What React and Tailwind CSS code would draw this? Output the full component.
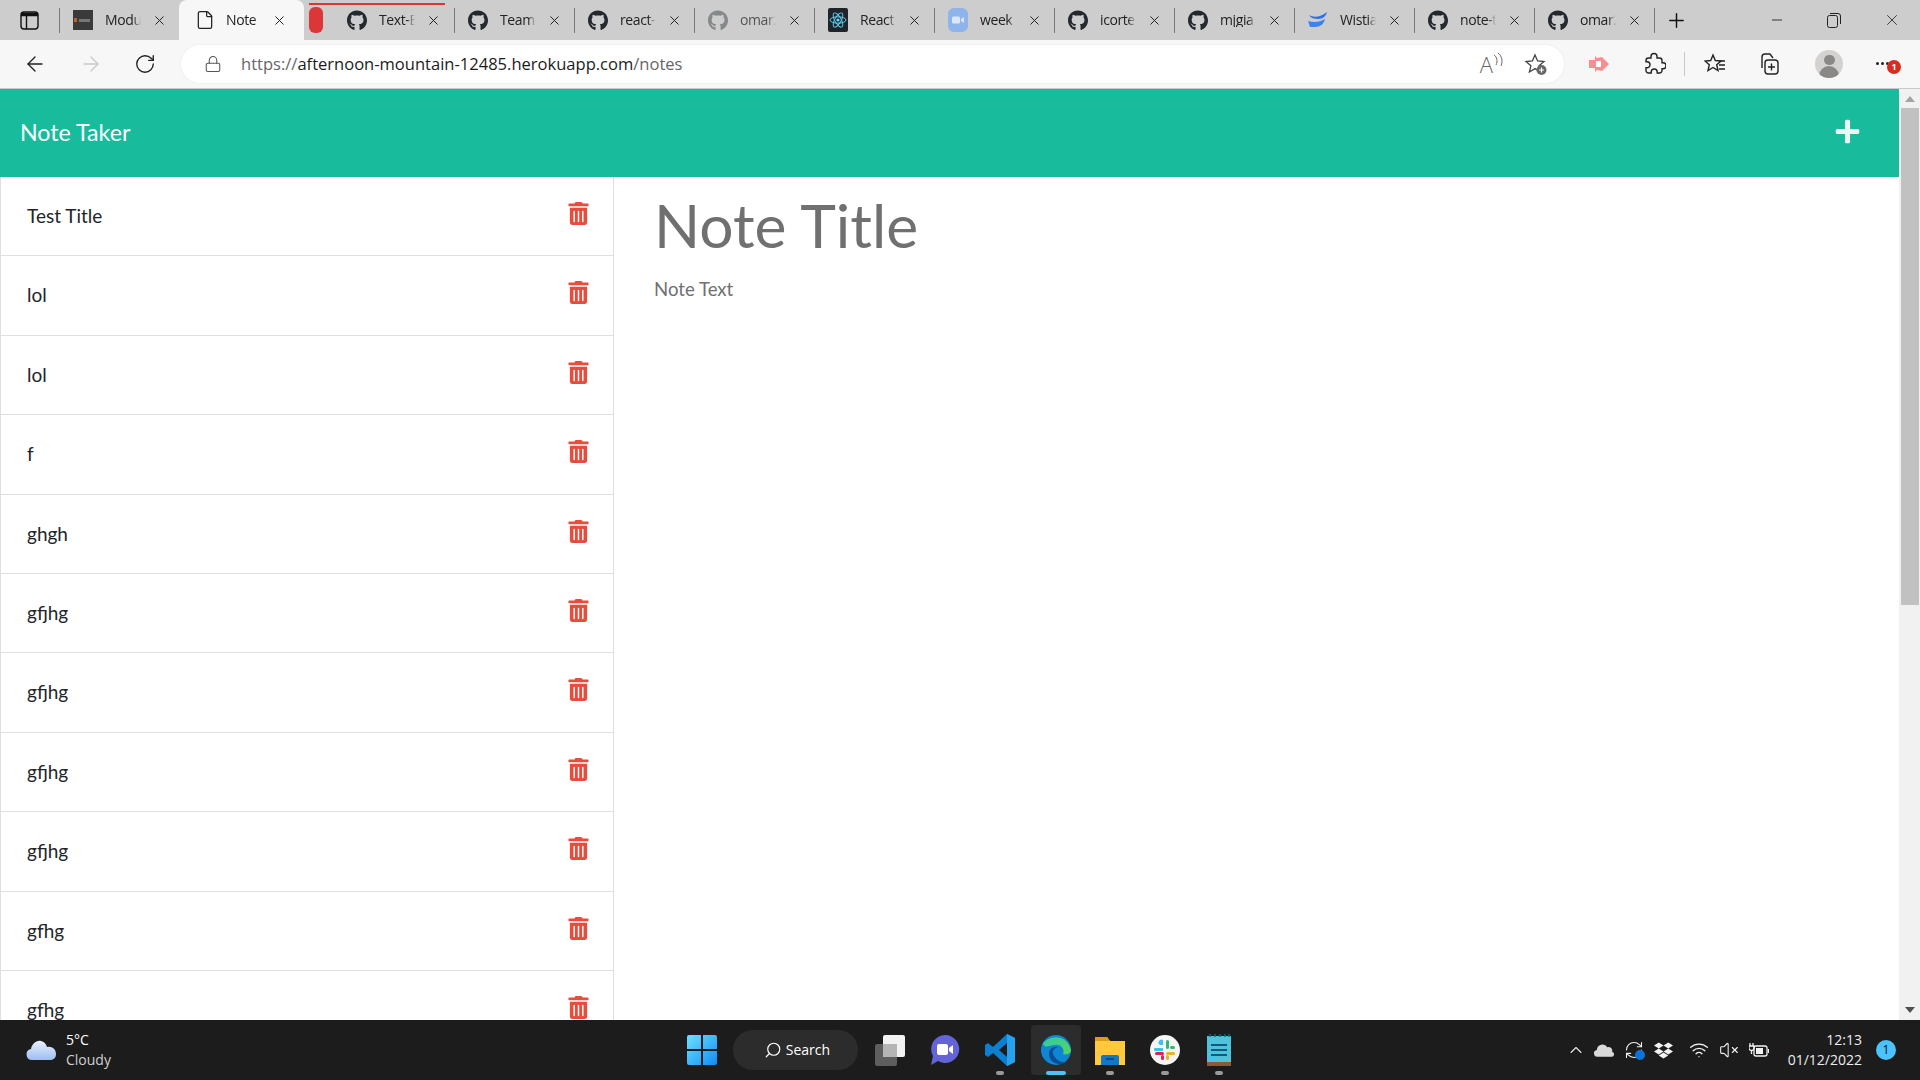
import React from 'react';
import { ArrowLeft, ArrowRight, RotateCw, Lock, X, Plus, Minus, Search, ChevronUp, Wifi, VolumeX, File, RefreshCw } from 'lucide-react';
import { FaGithub, FaTrashAlt, FaPlus, FaDropbox } from 'react-icons/fa';

const NOTES = ['Test Title', 'lol', 'lol', 'f', 'ghgh', 'gfjhg', 'gfjhg', 'gfjhg', 'gfjhg', 'gfhg', 'gfhg'];

function Thumb() {
  return (
    <div className="flex h-5 w-5 items-center bg-[#3a3a3a]">
      <div className="ml-[1px] h-[4px] w-[3px] bg-[#b5652c]" />
      <div className="ml-[2px] h-[3px] w-[11px] bg-[#777]" />
    </div>
  );
}

function ReactIcon() {
  return (
    <svg width="20" height="24" viewBox="0 0 20 24">
      <rect width="20" height="24" rx="2" fill="#20232a" />
      <g fill="none" stroke="#61dafb" strokeWidth="0.9">
        <ellipse cx="10" cy="12" rx="8" ry="3.2" />
        <ellipse cx="10" cy="12" rx="8" ry="3.2" transform="rotate(60 10 12)" />
        <ellipse cx="10" cy="12" rx="8" ry="3.2" transform="rotate(120 10 12)" />
      </g>
      <circle cx="10" cy="12" r="1.6" fill="#61dafb" />
    </svg>
  );
}

function ZoomIcon() {
  return (
    <svg width="20" height="24" viewBox="0 0 20 24">
      <rect width="20" height="24" rx="6" fill="#8fb4ec" />
      <rect x="4" y="8.5" width="8" height="7" rx="1.5" fill="#dbe7f9" />
      <path d="M13 11l3-2v6l-3-2z" fill="#dbe7f9" />
    </svg>
  );
}

function WistiaIcon() {
  return (
    <svg width="20" height="16" viewBox="0 0 20 16">
      <path d="M1 3c5 3 12 2 18-3-1 4-4 7-9 7-4 0-7-1-9-4z" fill="#2c6fe8" />
      <path d="M0 9c6 2 12 1 17-2-1 5-5 8-10 8H2z" fill="#3b82f6" />
    </svg>
  );
}

const TABS = [
  { label: 'Modu', icon: <Thumb /> },
  { label: 'Note', active: true },
  { label: 'Text-E', icon: <FaGithub size={21} color="#24292f" />, wide: true },
  { label: 'Team-', icon: <FaGithub size={21} color="#24292f" /> },
  { label: 'react-', icon: <FaGithub size={21} color="#24292f" /> },
  { label: 'omar2', icon: <FaGithub size={21} color="#85898b" />, dim: true },
  { label: 'React', icon: <ReactIcon /> },
  { label: 'week', icon: <ZoomIcon /> },
  { label: 'icorte', icon: <FaGithub size={21} color="#24292f" /> },
  { label: 'mjgia', icon: <FaGithub size={21} color="#24292f" /> },
  { label: 'Wistia', icon: <WistiaIcon /> },
  { label: 'note-t', icon: <FaGithub size={21} color="#24292f" /> },
  { label: 'omar2', icon: <FaGithub size={21} color="#24292f" /> },
];

function Label({ children, dim, className }) {
  return (
    <span className={`block overflow-hidden whitespace-nowrap text-[14px] leading-none tracking-[-0.4px] [mask-image:linear-gradient(to_right,black_78%,transparent_100%)] ${dim ? 'text-[#555]' : 'text-[#222]'} ${className}`}>
      {children}
    </span>
  );
}

function Tab({ tab }) {
  if (tab.active) {
    return (
      <div className="flex h-10 w-[125px] shrink-0 items-center rounded-t-lg bg-[#f7f7f7] pl-4">
        <File size={20} strokeWidth={1.5} color="#222" />
        <Label className="ml-[11px] w-[36px]">{tab.label}</Label>
        <X size={15} strokeWidth={1.6} color="#222" className="ml-[10px]" />
      </div>
    );
  }
  return (
    <div className={`relative flex h-10 shrink-0 items-center ${tab.wide ? 'w-[150px]' : 'w-[120px]'}`}>
      {tab.wide ? (
        <>
          <div className="absolute left-[5px] top-[3px] h-[2px] w-[136px] bg-[#d93636]" />
          <div className="ml-[5px] h-[26px] w-[14px] rounded-md bg-[#dc3636]" />
          <div className="ml-[24px] flex w-5 justify-center">{tab.icon}</div>
        </>
      ) : (
        <>
          <div className="h-[25px] w-px bg-[#7a7a7a]" />
          <div className="ml-[13px] flex w-5 justify-center">{tab.icon}</div>
        </>
      )}
      <Label dim={tab.dim} className="ml-3 w-[36px]">{tab.label}</Label>
      <X size={15} strokeWidth={1.6} color="#222" className="ml-[11px]" />
    </div>
  );
}

function TabBar() {
  return (
    <div className="flex h-10 shrink-0 items-center bg-[#cdcdcd]">
      <div className="flex w-[59px] shrink-0 justify-center pr-[1px]">
        <svg width="19" height="19" viewBox="0 0 19 19" fill="none" stroke="#111">
          <rect x="1" y="1" width="17" height="17" rx="3" strokeWidth="1.4" />
          <path d="M1 3.500h17" strokeWidth="3.500" />
          <path d="M6.500 5v13" strokeWidth="1.400" />
        </svg>
      </div>
      <Tab tab={TABS[0]} />
      <Tab tab={TABS[1]} />
      {TABS.slice(2).map((t, i) => <Tab key={i} tab={t} />)}
      <div className="h-[25px] w-px shrink-0 bg-[#7a7a7a]" />
      <Plus size={23} strokeWidth={1.5} color="#111" className="ml-[10px] shrink-0" />
      <Minus size={16} strokeWidth={1.3} color="#222" className="ml-[81px] shrink-0" />
      <svg width="14" height="15" viewBox="0 0 14 15" fill="none" stroke="#222" className="ml-[42px] shrink-0">
        <rect x="0.500" y="2.500" width="10" height="12" rx="2" />
        <path d="M3 .500h8a2.500 2.500 0 0 1 2.500 2.500v8" />
      </svg>
      <X size={18} strokeWidth={1.1} color="#222" className="ml-[42px] shrink-0" />
    </div>
  );
}

function Toolbar() {
  return (
    <div className="flex h-[49px] shrink-0 items-center border-b border-[#c9c9c9] bg-[#f7f7f7] pb-[1px]">
      <ArrowLeft size={24} strokeWidth={1.4} color="#222" className="ml-[23px]" />
      <ArrowRight size={24} strokeWidth={1.4} color="#c9c9c9" className="ml-[32px]" />
      <RotateCw size={22} strokeWidth={1.5} color="#222" className="ml-[31px]" />
      <div className="ml-[25px] flex h-[38px] w-[1383px] items-center rounded-full bg-white shadow-[0_0_3px_rgba(0,0,0,0.06)]">
        <Lock size={18} strokeWidth={1.4} color="#555" className="ml-[23px]" />
        <span className="ml-[19px] mt-[1px] text-[16.55px] leading-none text-[#666]">
          https://<span className="text-[#1c1c1c]">afternoon-mountain-12485.herokuapp.com</span>/notes
        </span>
        <span className="ml-auto text-[22px] font-light leading-none text-[#666]">A</span>
        <svg width="10" height="16" viewBox="0 0 10 16" fill="none" stroke="#666" className="mb-2">
          <path d="M1 3c3 2 4 6 2 10M5 1c4 3 5 8 3 13" />
        </svg>
        <svg width="24" height="24" viewBox="0 0 24 24" className="ml-[21px] mr-[16px]">
          <path d="M11 3l2.600 6 6.400.6-4.900 4.200 1.500 6.200L11 16.600 5.400 20l1.500-6.200L2 9.600 8.400 9z" fill="none" stroke="#444" strokeWidth="1.300" />
          <circle cx="17.500" cy="18" r="5" fill="#666" />
          <path d="M15 18h5M17.500 15.500v5" stroke="#fff" strokeWidth="1.200" />
        </svg>
      </div>
      <svg width="20" height="18" viewBox="0 0 20 18" className="ml-[25px]">
        <path d="M0 5h6V1l2 2 5-1 7 7-7 7-5-1-2 2v-4H0z" fill="#f98d90" />
        <path d="M7 6h5v6H7z" fill="#fff" />
      </svg>
      <svg width="24" height="24" viewBox="0 0 24 24" fill="none" stroke="#222" strokeWidth="1.400" className="ml-[33px]">
        <path d="M9 6V4.500a3 3 0 0 1 6 0V6h2.500A2.500 2.500 0 0 1 20 8.500v2.300h1a3 3 0 0 1 0 6h-1v1.700a2.500 2.500 0 0 1-2.500 2.500h-2.300v-1a3 3 0 0 0-6 0v1H6.500A2.500 2.500 0 0 1 4 18.500v-2.700h1a3 3 0 0 0 0-6H4V8.500A2.500 2.500 0 0 1 6.500 6z" />
      </svg>
      <div className="ml-[18px] h-[24px] w-px bg-[#c8c8c8]" />
      <svg width="22" height="22" viewBox="0 0 22 22" fill="none" stroke="#222" strokeWidth="1.400" className="ml-[19px]">
        <path d="M9 2l2.300 5.500 5.700.5-4.300 3.700 1.300 5.800L9 14.500 4 17.500l1.300-5.800L1 8l5.700-.5z" />
        <path d="M15 8h6M15 12h6M15 16h6" />
      </svg>
      <svg width="22" height="24" viewBox="0 0 22 24" fill="none" stroke="#222" strokeWidth="1.400" className="ml-[32px]">
        <path d="M4 16V5a3 3 0 0 1 3-3h5l3 4" />
        <rect x="7" y="8" width="13" height="14" rx="3" />
        <path d="M13.500 11.500v7M10 15h7" />
      </svg>
      <div className="ml-[35px] flex h-7 w-7 flex-col items-center overflow-hidden rounded-full bg-[#d4d2d0]">
        <div className="mt-[5px] h-[11px] w-[11px] rounded-full bg-[#8a8886]" />
        <div className="mt-[1px] h-[12px] w-[20px] rounded-t-full bg-[#8a8886]" />
      </div>
      <div className="relative ml-[33px] flex h-4 w-6 items-center gap-[2px]">
        <div className="h-[3px] w-[3px] rounded-full bg-[#222]" />
        <div className="h-[3px] w-[3px] rounded-full bg-[#222]" />
        <div className="h-[3px] w-[3px] rounded-full bg-[#222]" />
        <div className="absolute left-[11px] top-[4px] flex h-[14px] w-[14px] items-center justify-center rounded-full bg-[#d92c20] text-[9px] font-bold leading-none text-white">1</div>
      </div>
    </div>
  );
}

function NoteRow({ title }) {
  return (
    <div className="flex h-[79.4px] shrink-0 items-start justify-between border-b border-[#dfdfdf] pl-[26px] pr-[23px]">
      <span className="mt-[24px] text-[19px] leading-[30px] text-[#212529]">{title}</span>
      <FaTrashAlt size={23} color="#e74c3c" className="mt-[25px]" />
    </div>
  );
}

function Scrollbar() {
  return (
    <div className="flex w-[21px] shrink-0 flex-col items-center bg-[#f1f1f1]">
      <div className="mt-[7px] h-0 w-0 border-x-[5px] border-b-[6px] border-x-transparent border-b-[#a3a3a3]" />
      <div className="mt-[6px] h-[497px] w-[18px] bg-[#c1c1c1]" />
      <div className="mb-[7px] mt-auto h-0 w-0 border-x-[5px] border-t-[6px] border-x-transparent border-t-[#505050]" />
    </div>
  );
}

function NotesPage() {
  return (
    <div className="flex min-h-0 flex-1 font-['Lato',sans-serif]">
      <div className="flex min-w-0 flex-1 flex-col">
        <div className="flex h-[88px] shrink-0 items-center justify-between bg-[#18bc9c] pl-5 pr-[38px]">
          <span className="text-[23.2px] leading-none text-white">Note Taker</span>
          <FaPlus size={27} color="#eef5f3" className="mb-[4px]" />
        </div>
        <div className="flex min-h-0 flex-1">
          <div className="flex w-[614px] shrink-0 flex-col overflow-hidden border-x border-[#dfdfdf]">
            {NOTES.map((n, i) => <NoteRow key={i} title={n} />)}
          </div>
          <div className="flex-1 pl-[40px]">
            <div className="mt-[12px] text-[60.500px] leading-[72px] text-[#707070]">Note Title</div>
            <div className="mt-[13px] text-[18.600px] leading-[30px] text-[#707070]">Note Text</div>
          </div>
        </div>
      </div>
      <Scrollbar />
    </div>
  );
}

function TrayIcon({ children, className }) {
  return <div className={`flex h-5 items-center justify-center ${className}`}>{children}</div>;
}

function TaskIcon({ children, mark, className }) {
  return (
    <div className={`relative flex h-[50px] items-center justify-center ${className}`}>
      {children}
      {mark && <div className="absolute bottom-0 h-[4px] w-2 rounded-full bg-[#9a9a9a]" />}
    </div>
  );
}

function Taskbar() {
  return (
    <div className="flex h-[60px] shrink-0 items-center bg-[#1c1c1c] font-['Open_Sans',sans-serif]">
      <svg width="30" height="20" viewBox="0 0 30 20" className="ml-[26px]">
        <defs>
          <linearGradient id="cl" x1="0" y1="0" x2="0" y2="1">
            <stop offset="0" stopColor="#e9f1fd" />
            <stop offset="1" stopColor="#9dbdf0" />
          </linearGradient>
        </defs>
        <path d="M6 20a5.500 5.500 0 0 1-1-10.900C6 4 10 0 15 1c3 .5 5 3 6 6 5-1 9 2 9 7 0 3.500-2 6-6 6z" fill="url(#cl)" />
      </svg>
      <div className="ml-[10px] flex flex-col text-[14px] leading-[20px]">
        <span className="text-white">5°C</span>
        <span className="text-[#cfcfcf]">Cloudy</span>
      </div>
      <svg width="30" height="30" viewBox="0 0 30 30" className="ml-[576px]">
        <defs>
          <linearGradient id="win" x1="0" y1="0" x2="1" y2="1">
            <stop offset="0" stopColor="#6fe0ff" />
            <stop offset="1" stopColor="#0f8cf5" />
          </linearGradient>
        </defs>
        <path d="M0 2a2 2 0 0 1 2-2h12v14H0zM16 0h12a2 2 0 0 1 2 2v12H16zM0 16h14v14H2a2 2 0 0 1-2-2zM16 16h14v12a2 2 0 0 1-2 2H16z" fill="url(#win)" />
      </svg>
      <div className="ml-[16px] flex h-10 w-[125px] items-center justify-center rounded-full bg-[#2c2c2c] pl-[3px] text-[14px] leading-none text-white">
        <Search size={18} strokeWidth={1.6} className="-scale-x-100" />
        <span className="ml-1">Search</span>
      </div>
      <TaskIcon className="ml-[16px] w-[32px]">
        <svg width="30" height="32" viewBox="0 0 30 32">
          <rect x="0" y="10" width="22" height="22" rx="2" fill="#5e5e5e" />
          <rect x="8" y="1" width="22" height="22" rx="2" fill="#f2f2f2" />
          <rect x="8" y="10" width="14" height="13" fill="#b5b5b5" />
        </svg>
      </TaskIcon>
      <TaskIcon className="ml-[23px] w-[32px]">
        <svg width="30" height="32" viewBox="0 0 30 32">
          <path d="M15 1a14 14 0 1 1-7 26L1 31l2-9A14 14 0 0 1 15 1z" fill="#6264d8" />
          <rect x="7" y="10" width="11" height="11" rx="2" fill="#fff" />
          <path d="M19 14l4-3v9l-4-3z" fill="#fff" />
        </svg>
      </TaskIcon>
      <TaskIcon mark className="ml-[23px] w-[32px]">
        <svg width="30" height="32" viewBox="0 0 30 32">
          <path d="M22 0l8 4v24l-8 4L8 19l-5 4-3-2v-10l3-2 5 4z" fill="#0c7fd1" />
          <path d="M22 0l8 4v24l-8 4z" fill="#27a1ee" />
          <path d="M22 9l-8 7 8 7z" fill="#1c1c1c" />
        </svg>
      </TaskIcon>
      <div className="relative ml-[15px] flex h-[50px] w-[50px] items-center justify-center rounded bg-[#2c2c2c]">
        <svg width="30" height="30" viewBox="0 0 30 30">
          <defs>
            <linearGradient id="ed" x1="0" y1="0" x2="1" y2="1">
              <stop offset="0" stopColor="#36c7a5" />
              <stop offset="1" stopColor="#52d65a" />
            </linearGradient>
          </defs>
          <circle cx="15" cy="15" r="15" fill="#0f86d4" />
          <path d="M2 9C6 1 25-3 30 15c0 3-3 5-8 4 2-5-2-10-8-9-6 0-9 4-12-1z" fill="url(#ed)" />
          <path d="M13 21c-3-4 0-9 5-8-8-4-13 5-8 12 4 5 11 5 16 2-5 1-10-1-13-6z" fill="#0a4d94" />
        </svg>
        <div className="absolute bottom-0 h-[4px] w-5 rounded-full bg-[#4cc2ff]" />
      </div>
      <TaskIcon mark className="ml-[14px] w-[30px]">
        <svg width="30" height="30" viewBox="0 0 30 30">
          <path d="M0 2h12l3 4h15v24H0z" fill="#ffc83d" />
          <path d="M0 2h12l3 4H0z" fill="#dc9d14" />
          <path d="M6 22a2 2 0 0 1 2-2h14a2 2 0 0 1 2 2v8H6z" fill="#0f78c9" />
          <path d="M11 24h8" stroke="#0a3f78" strokeWidth="1.500" />
        </svg>
      </TaskIcon>
      <TaskIcon mark className="ml-[25px] w-[30px]">
        <svg width="30" height="30" viewBox="0 0 30 30">
          <circle cx="15" cy="15" r="15" fill="#f5f5f5" />
          <path d="M13 5v5h-3a2.500 2.500 0 1 1 3-5z" fill="#36c5f0" />
          <path d="M5 13h8v3H6a1.500 1.500 0 0 1-1-3z" fill="#36c5f0" />
          <rect x="16" y="5" width="3" height="9" rx="1.500" fill="#2eb67d" />
          <rect x="20" y="11" width="5" height="3" rx="1.500" fill="#2eb67d" />
          <rect x="5" y="17" width="9" height="3" rx="1.500" fill="#e01e5a" />
          <rect x="11" y="20" width="3" height="5" rx="1.500" fill="#e01e5a" />
          <rect x="16" y="17" width="9" height="3" rx="1.500" fill="#ecb22e" />
          <rect x="16" y="20" width="3" height="5" rx="1.500" fill="#ecb22e" />
        </svg>
      </TaskIcon>
      <TaskIcon mark className="ml-[27px] w-[24px]">
        <svg width="24" height="32" viewBox="0 0 24 32">
          <rect x="0" y="2" width="24" height="28" fill="#4fc3dc" />
          <rect x="0" y="28" width="24" height="4" fill="#8a5a3c" />
          <path d="M3 0v3M8 0v3M13 0v3M18 0v3M22 0v3" stroke="#1e5f86" strokeWidth="1.500" />
          <path d="M4 11h16M4 16h16M4 21h16" stroke="#13597d" strokeWidth="2" />
        </svg>
      </TaskIcon>
      <TrayIcon className="ml-[335px] w-[20px]">
        <ChevronUp size={22} strokeWidth={1.3} color="#e8e8e8" />
      </TrayIcon>
      <TrayIcon className="ml-[8px] w-[20px]">
        <svg width="21" height="13" viewBox="0 0 21 13">
          <path d="M4 13a3.500 3.500 0 0 1-1-7 6 6 0 0 1 11-3 4 4 0 0 1 5 5 2.500 2.500 0 0 1-1 5z" fill="#d9d9d9" />
        </svg>
      </TrayIcon>
      <TrayIcon className="relative ml-[10px] w-[20px]">
        <RefreshCw size={20} strokeWidth={1.3} color="#f2f2f2" />
        <div className="absolute bottom-0 right-[-1px] h-[10px] w-[10px] rounded-full bg-[#0a74da]" />
      </TrayIcon>
      <TrayIcon className="ml-[10px] w-[20px]">
        <FaDropbox size={19} color="#f2f2f2" />
      </TrayIcon>
      <TrayIcon className="ml-[15px] w-[20px]">
        <Wifi size={20} strokeWidth={1.6} color="#f2f2f2" />
      </TrayIcon>
      <TrayIcon className="ml-[10px] w-[20px]">
        <VolumeX size={20} strokeWidth={1.3} color="#f2f2f2" />
      </TrayIcon>
      <TrayIcon className="ml-[10px] w-[20px]">
        <svg width="20" height="17" viewBox="0 0 20 17" fill="none" stroke="#f2f2f2" strokeWidth="1.300">
          <rect x="5" y="4" width="13" height="10" rx="2" />
          <path d="M19.500 7v4" />
          <rect x="7" y="6" width="7" height="6" fill="#f2f2f2" stroke="none" />
          <path d="M1 1v3M4 1v3M0 4h5v2a2.500 2.500 0 0 1-5 0zM2.500 8v4" />
        </svg>
      </TrayIcon>
      <div className="ml-auto flex flex-col items-end text-[14px] leading-[20px] text-[#ededed]">
        <span>12:13</span>
        <span>01/12/2022</span>
      </div>
      <div className="ml-[14px] mr-[24px] flex h-5 w-5 items-center justify-center rounded-full bg-[#4cc2ff] text-[12px] leading-none text-[#111]">1</div>
    </div>
  );
}

export default function App() {
  return (
    <div className="flex h-screen w-full flex-col overflow-hidden bg-white font-['Open_Sans',sans-serif]">
      <TabBar />
      <Toolbar />
      <NotesPage />
      <Taskbar />
    </div>
  );
}
